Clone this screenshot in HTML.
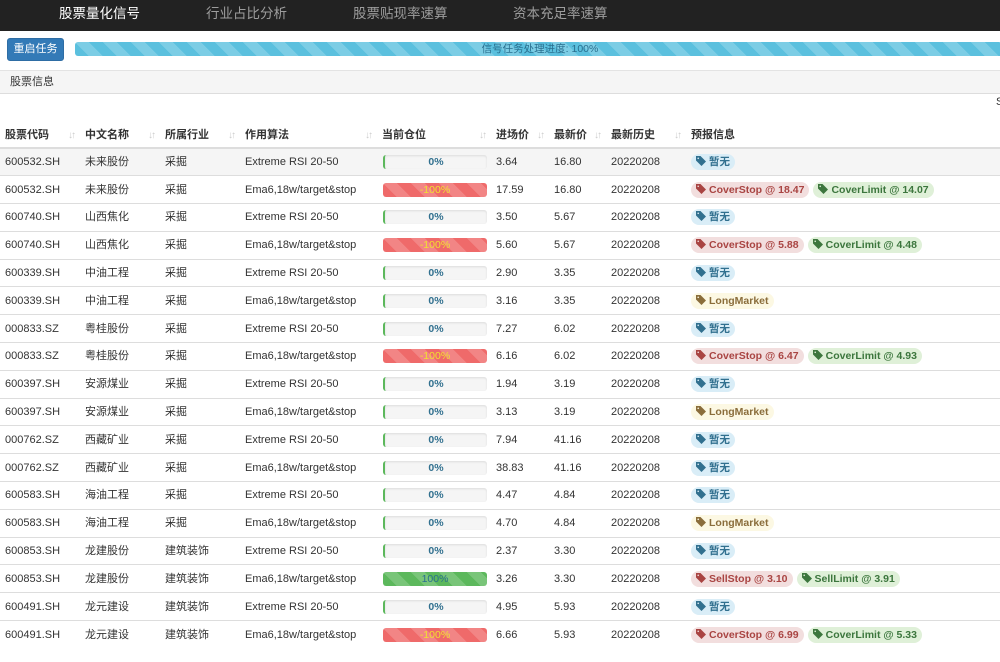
<!DOCTYPE html>
<html><head><meta charset="utf-8">
<style>
*{box-sizing:border-box;margin:0;padding:0}
body{width:1000px;height:662px;overflow:hidden;background:#fff;font-family:"Liberation Sans","Noto Sans CJK SC",sans-serif;font-size:11px;color:#333;position:relative}
.nav{position:absolute;left:0;top:0;width:1000px;height:31px;background:#222;}
.nav span{position:absolute;top:5px;font-size:13.5px;line-height:18px;color:#9d9d9d}
.nav span.a{color:#fff}
.btn{position:absolute;left:7px;top:38px;width:57px;height:23px;background:#337ab7;border:1px solid #2e6da4;border-radius:3px;color:#fff;font-size:11px;text-align:center;line-height:21px}
.pb{position:absolute;left:75px;top:42px;width:930px;height:14px;border-radius:3px;background-color:#5bc0de;background-image:linear-gradient(45deg,rgba(255,255,255,.2) 25%,transparent 25%,transparent 50%,rgba(255,255,255,.2) 50%,rgba(255,255,255,.2) 75%,transparent 75%,transparent);background-size:28px 28px;color:#2a6f8f;text-align:center;font-size:10.5px;line-height:14px}
.ph{position:absolute;left:0;top:70px;width:1000px;height:24px;background:#f5f5f5;border-top:1px solid #e3e3e3;border-bottom:1px solid #ddd;padding-left:10px;line-height:22px;font-size:11px}
.s{position:absolute;left:996px;top:96px;font-size:11px}
table{position:absolute;left:0;top:122px;border-collapse:collapse;table-layout:fixed;width:1000px}
th{height:26px;text-align:left;font-weight:bold;padding-left:5px;border-bottom:2px solid #ddd;position:relative;font-size:11px;line-height:14px}
th i{position:absolute;right:6px;top:7px;color:#ccc;font-style:normal;font-size:10px;letter-spacing:-2px}
td{height:27.8px;padding-left:5px;border-top:1px solid #ddd;white-space:nowrap;line-height:14px;vertical-align:middle}
tr.h td{background:#f5f5f5}
.bar{width:104px;height:14px;border-radius:3px;text-align:center;line-height:14px;font-weight:bold;font-size:10.5px;margin-left:1px}
.z{background:#f5f5f5;box-shadow:inset 0 1px 2px rgba(0,0,0,.1);border-left:2px solid #5cb85c;color:#31708f}
.r{background-color:#ef6a6a;color:#f0e030;font-weight:normal}
.g{background-color:#5cb85c;color:#2a6f8f;font-weight:normal}
.r,.g{background-image:linear-gradient(45deg,rgba(255,255,255,.18) 25%,transparent 25%,transparent 50%,rgba(255,255,255,.18) 50%,rgba(255,255,255,.18) 75%,transparent 75%,transparent);background-size:28px 28px}
.l{display:inline-block;height:16px;line-height:16px;border-radius:8px;padding:0 5px 0 5px;font-weight:bold;font-size:10.5px;margin-right:4px;vertical-align:middle}
.l svg{width:10px;height:10px;vertical-align:-1px;margin-right:3px}
.lr{background:#f2dede;color:#a94442}.lg{background:#dff0d8;color:#3c763d}.lb{background:#d9edf7;color:#31708f}.ly{background:#fcf8e3;color:#8a6d3b}
</style></head><body>
<div class="nav"><span class="a" style="left:59px">股票量化信号</span><span style="left:206px">行业占比分析</span><span style="left:353px">股票贴现率速算</span><span style="left:513px">资本充足率速算</span></div>
<div class="btn">重启任务</div>
<div class="pb">信号任务处理进度: 100%</div>
<div class="ph">股票信息</div>
<div class="s">S</div>
<svg width="0" height="0" style="position:absolute"><defs><symbol id="t" viewBox="0 0 10 10"><path d="M0 0H4.5L10 5.5 5.5 10 0 4.5Z M2.2 1.5a0.8 0.8 0 1 0 0.01 0Z" fill="currentColor" fill-rule="evenodd"/></symbol></defs></svg>
<table>
<colgroup><col style="width:80px"><col style="width:80px"><col style="width:80px"><col style="width:137px"><col style="width:114px"><col style="width:58px"><col style="width:57px"><col style="width:80px"><col></colgroup>
<tr><th>股票代码<i>↓↑</i></th><th>中文名称<i>↓↑</i></th><th>所属行业<i>↓↑</i></th><th>作用算法<i>↓↑</i></th><th>当前仓位<i>↓↑</i></th><th>进场价<i>↓↑</i></th><th>最新价<i>↓↑</i></th><th>最新历史<i>↓↑</i></th><th>预报信息</th></tr>
<tr class="h"><td>600532.SH</td><td>未来股份</td><td>采掘</td><td>Extreme RSI 20-50</td><td><div class="bar z">0%</div></td><td>3.64</td><td>16.80</td><td>20220208</td><td><span class="l lb"><svg><use href="#t"/></svg>暂无</span></td></tr>
<tr><td>600532.SH</td><td>未来股份</td><td>采掘</td><td>Ema6,18w/target&amp;stop</td><td><div class="bar r">-100%</div></td><td>17.59</td><td>16.80</td><td>20220208</td><td><span class="l lr"><svg><use href="#t"/></svg>CoverStop @ 18.47</span><span class="l lg"><svg><use href="#t"/></svg>CoverLimit @ 14.07</span></td></tr>
<tr><td>600740.SH</td><td>山西焦化</td><td>采掘</td><td>Extreme RSI 20-50</td><td><div class="bar z">0%</div></td><td>3.50</td><td>5.67</td><td>20220208</td><td><span class="l lb"><svg><use href="#t"/></svg>暂无</span></td></tr>
<tr><td>600740.SH</td><td>山西焦化</td><td>采掘</td><td>Ema6,18w/target&amp;stop</td><td><div class="bar r">-100%</div></td><td>5.60</td><td>5.67</td><td>20220208</td><td><span class="l lr"><svg><use href="#t"/></svg>CoverStop @ 5.88</span><span class="l lg"><svg><use href="#t"/></svg>CoverLimit @ 4.48</span></td></tr>
<tr><td>600339.SH</td><td>中油工程</td><td>采掘</td><td>Extreme RSI 20-50</td><td><div class="bar z">0%</div></td><td>2.90</td><td>3.35</td><td>20220208</td><td><span class="l lb"><svg><use href="#t"/></svg>暂无</span></td></tr>
<tr><td>600339.SH</td><td>中油工程</td><td>采掘</td><td>Ema6,18w/target&amp;stop</td><td><div class="bar z">0%</div></td><td>3.16</td><td>3.35</td><td>20220208</td><td><span class="l ly"><svg><use href="#t"/></svg>LongMarket</span></td></tr>
<tr><td>000833.SZ</td><td>粤桂股份</td><td>采掘</td><td>Extreme RSI 20-50</td><td><div class="bar z">0%</div></td><td>7.27</td><td>6.02</td><td>20220208</td><td><span class="l lb"><svg><use href="#t"/></svg>暂无</span></td></tr>
<tr><td>000833.SZ</td><td>粤桂股份</td><td>采掘</td><td>Ema6,18w/target&amp;stop</td><td><div class="bar r">-100%</div></td><td>6.16</td><td>6.02</td><td>20220208</td><td><span class="l lr"><svg><use href="#t"/></svg>CoverStop @ 6.47</span><span class="l lg"><svg><use href="#t"/></svg>CoverLimit @ 4.93</span></td></tr>
<tr><td>600397.SH</td><td>安源煤业</td><td>采掘</td><td>Extreme RSI 20-50</td><td><div class="bar z">0%</div></td><td>1.94</td><td>3.19</td><td>20220208</td><td><span class="l lb"><svg><use href="#t"/></svg>暂无</span></td></tr>
<tr><td>600397.SH</td><td>安源煤业</td><td>采掘</td><td>Ema6,18w/target&amp;stop</td><td><div class="bar z">0%</div></td><td>3.13</td><td>3.19</td><td>20220208</td><td><span class="l ly"><svg><use href="#t"/></svg>LongMarket</span></td></tr>
<tr><td>000762.SZ</td><td>西藏矿业</td><td>采掘</td><td>Extreme RSI 20-50</td><td><div class="bar z">0%</div></td><td>7.94</td><td>41.16</td><td>20220208</td><td><span class="l lb"><svg><use href="#t"/></svg>暂无</span></td></tr>
<tr><td>000762.SZ</td><td>西藏矿业</td><td>采掘</td><td>Ema6,18w/target&amp;stop</td><td><div class="bar z">0%</div></td><td>38.83</td><td>41.16</td><td>20220208</td><td><span class="l lb"><svg><use href="#t"/></svg>暂无</span></td></tr>
<tr><td>600583.SH</td><td>海油工程</td><td>采掘</td><td>Extreme RSI 20-50</td><td><div class="bar z">0%</div></td><td>4.47</td><td>4.84</td><td>20220208</td><td><span class="l lb"><svg><use href="#t"/></svg>暂无</span></td></tr>
<tr><td>600583.SH</td><td>海油工程</td><td>采掘</td><td>Ema6,18w/target&amp;stop</td><td><div class="bar z">0%</div></td><td>4.70</td><td>4.84</td><td>20220208</td><td><span class="l ly"><svg><use href="#t"/></svg>LongMarket</span></td></tr>
<tr><td>600853.SH</td><td>龙建股份</td><td>建筑装饰</td><td>Extreme RSI 20-50</td><td><div class="bar z">0%</div></td><td>2.37</td><td>3.30</td><td>20220208</td><td><span class="l lb"><svg><use href="#t"/></svg>暂无</span></td></tr>
<tr><td>600853.SH</td><td>龙建股份</td><td>建筑装饰</td><td>Ema6,18w/target&amp;stop</td><td><div class="bar g">100%</div></td><td>3.26</td><td>3.30</td><td>20220208</td><td><span class="l lr"><svg><use href="#t"/></svg>SellStop @ 3.10</span><span class="l lg"><svg><use href="#t"/></svg>SellLimit @ 3.91</span></td></tr>
<tr><td>600491.SH</td><td>龙元建设</td><td>建筑装饰</td><td>Extreme RSI 20-50</td><td><div class="bar z">0%</div></td><td>4.95</td><td>5.93</td><td>20220208</td><td><span class="l lb"><svg><use href="#t"/></svg>暂无</span></td></tr>
<tr><td>600491.SH</td><td>龙元建设</td><td>建筑装饰</td><td>Ema6,18w/target&amp;stop</td><td><div class="bar r">-100%</div></td><td>6.66</td><td>5.93</td><td>20220208</td><td><span class="l lr"><svg><use href="#t"/></svg>CoverStop @ 6.99</span><span class="l lg"><svg><use href="#t"/></svg>CoverLimit @ 5.33</span></td></tr>
</table>
</body></html>
